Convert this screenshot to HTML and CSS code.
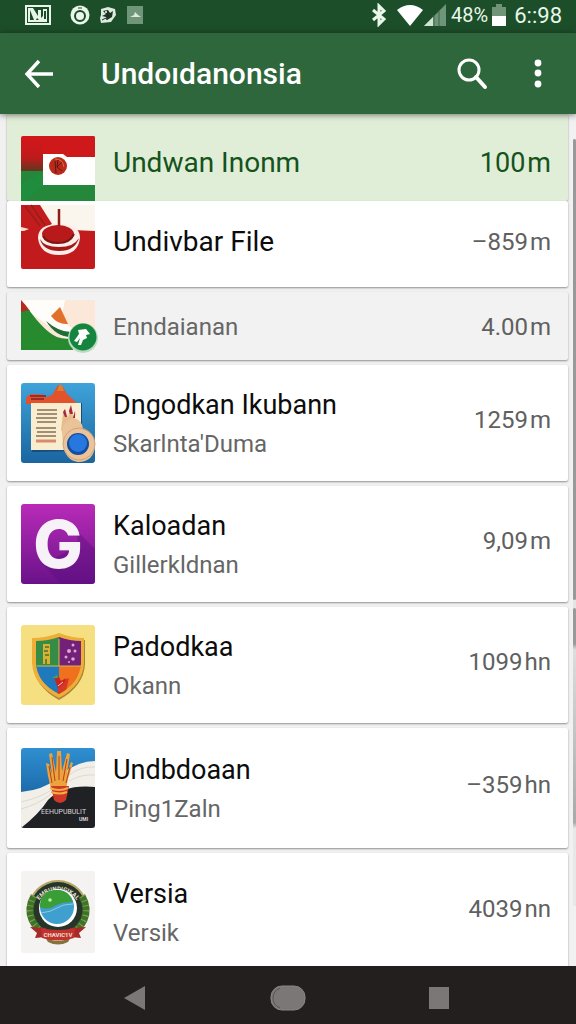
FILE: index.html
```html
<!DOCTYPE html>
<html lang="id">
<head>
    <meta charset="UTF-8">
    <meta name="viewport" content="width=device-width, initial-scale=1">
    <title>Undoıdanonsia</title>
    <link rel="stylesheet" href="styles.css">
</head>
<body>
<div class="status">
    <div class="status-left">
        <svg width="26" height="20" viewBox="0 0 26 20">
            <rect x="1" y="1" width="24" height="18" fill="#1c4a29" stroke="#e6f5e8" stroke-width="2"/>
            <path d="M3 3h5l5 8V5h3v8l2-2V4h4v13H3z" fill="#e6f5e8"/>
            <path d="M5 15V5l4 10zM11 15l1-2 2 2zM19 6h2v8h-2z" fill="#1c4a29"/>
        </svg>
        <svg class="ring" width="20" height="20" viewBox="0 0 20 20">
            <circle cx="10" cy="10" r="9.5" fill="#e8f7ea"/>
            <circle cx="10" cy="11" r="5" fill="none" stroke="#1c4a29" stroke-width="2"/>
            <path d="M8 3h4" stroke="#1c4a29"/>
        </svg>
        <svg width="18" height="18" viewBox="0 0 18 18">
            <path d="M2 3l7-2 7 2 1 6-5 7-10 1-1-5 1-3z" fill="#dcebdd"/>
            <path d="M4 5l5-1 2 3 3-2-1 6-5 3-1-3-4-1 4-2z" fill="#1b3322"/>
            <circle cx="7" cy="6" r="1" fill="#fff"/>
            <path d="M3 14l4-2 1 2" stroke="#1b3322" fill="none"/>
        </svg>
        <svg class="thumb" width="16" height="18" viewBox="0 0 16 18">
            <rect width="16" height="18" fill="#70967a"/>
            <path d="M3 11l4-2 1-3 3 3 3 2z" fill="#dde9df"/>
        </svg>
    </div>
    <div class="status-right">
        <svg width="16" height="24" viewBox="0 0 16 24">
            <path d="M2 7l11 9-5 5V3l5 5-11 9" fill="none" stroke="#e8f7ea" stroke-width="3"/>
        </svg>
        <svg class="wifi" width="26" height="21" viewBox="0 0 26 21">
            <path d="M0 5Q13-5 26 5L13 21z" fill="#fff"/>
        </svg>
        <svg width="22" height="22" viewBox="0 0 22 22">
            <path d="M0 22L22 0v22z" fill="#709479"/>
            <path d="M0 22l9-9v9z" fill="#d0e5d2"/>
            <path d="M10 11v11M15 6v16" stroke="#3c6949"/>
        </svg>
        <span class="percent">48%</span>
        <svg width="14" height="22" viewBox="0 0 14 22">
            <path d="M4 0h6v3h4v9H0V3h4z" fill="#6f9477"/>
            <path d="M0 12h14v10H0z" fill="#fff"/>
        </svg>
        <span class="clock">6::98</span>
    </div>
</div>

<header class="appbar">
    <button class="icon-btn" aria-label="Kembali">
        <svg width="30" height="30" viewBox="0 0 30 30">
            <path d="M15 2L3 15l12 13M3 15h26" fill="none" stroke="#fff" stroke-width="3.4"/>
        </svg>
    </button>
    <h1 class="title">Undoıdanonsia</h1>
    <button class="icon-btn" aria-label="Cari">
        <svg width="32" height="32" viewBox="0 0 32 32">
            <circle cx="12" cy="12" r="10" fill="none" stroke="#fff" stroke-width="3"/>
            <path d="M19 19l9 10" stroke="#fff" stroke-width="4" stroke-linecap="round"/>
        </svg>
    </button>
    <button class="icon-btn more" aria-label="Menu">
        <svg width="8" height="30" viewBox="0 0 8 30">
            <g fill="#fff">
                <circle cx="4" cy="4" r="3.4"/>
                <circle cx="4" cy="14" r="3.4"/>
                <circle cx="4" cy="25" r="3.4"/>
            </g>
        </svg>
    </button>
</header>

<main class="content">
    <ul class="list">
        <li class="row active">
            <svg class="pic" width="74" height="65" viewBox="0 0 74 65">
                <defs>
                    <linearGradient id="red" x2="0" y2="1">
                        <stop offset="0" stop-color="#d31719"/>
                        <stop offset=".6" stop-color="#c01a1c"/>
                        <stop offset="1" stop-color="#5a3a20"/>
                    </linearGradient>
                </defs>
                <path d="M0 2q0-2 2-2h70q2 0 2 2v34H0z" fill="url(#red)"/>
                <path d="M0 35h74v30H0z" fill="#25873a"/>
                <path d="M0 48l22-12v14L4 65H0z" fill="#1f8d3d"/>
                <path d="M22 18V0h50q2 0 2 2v19H44v-3z" fill="#cf181a"/>
                <path d="M22 18h20l4 3h28v28H22z" fill="#fff"/>
                <circle cx="37" cy="30" r="9" fill="#b92a1c"/>
                <path d="M34 25l1 12M37 24l-1 7 5 4M41 26l-5 5" fill="none" stroke="#5d1712"/>
                <path d="M34 23q8 0 9 8" fill="none" stroke="#e2722f"/>
            </svg>
            <div class="text"><div class="name">Undwan Inonm</div></div>
            <div class="amount">100<span class="unit">m</span></div>
        </li>
        <li class="row cut">
            <svg class="pic" width="74" height="64" viewBox="0 0 74 64">
                <path d="M0 0h74v26H0z" fill="#faf5ed"/>
                <path d="M0 0h19l12 19-12 7-19-2z" fill="#c41c1d"/>
                <path d="M4 1l15 20M10 0l14 20" stroke="#96201b" stroke-width="1.5"/>
                <path d="M0 26l6-3 68 3v36q0 2-2 2H2q-2 0-2-2z" fill="#c21b1d"/>
                <path d="M0 22l8 2-5 2H0z" fill="#f6dccc"/>
                <path d="M17 33q0-14 21-14t21 14q-2 17-21 17T17 33z" fill="#fbeee9"/>
                <path d="M19 34q3 12 19 12t20-13q-5 9-20 9t-19-8z" fill="#a3191a"/>
                <ellipse cx="37" cy="29" rx="16" ry="9" fill="#b8191b"/>
                <path d="M22 31q3 7 15 7t16-9" fill="none" stroke="#7e1614" stroke-width="2"/>
                <path d="M38 4v17" stroke="#8f1d1a" stroke-width="2.5"/>
            </svg>
            <div class="text"><div class="name">Undivbar File</div></div>
            <div class="amount">–859<span class="unit">m</span></div>
        </li>
        <li class="row muted">
            <svg class="pic" width="74" height="50" viewBox="0 0 74 50">
                <rect width="74" height="50" rx="2" fill="#fbe8d8"/>
                <path d="M2 0h42l-4 20 22 16-12 6L0 6z" fill="#fffdf9"/>
                <path d="M0 0q5 5 9 11L0 14z" fill="#b42a20"/>
                <path d="M0 12l8-2q16 22 28 27 8 3 16 1v12H0z" fill="#278a2e"/>
                <path d="M25 21q14 12 27 11l-2 5q-15 0-25-16z" fill="#216d36"/>
                <path d="M30 16l9-9 8 17q-10 1-17-8z" fill="#e2702a"/>
                <circle cx="62" cy="38" r="15" fill="#b8dcc0"/>
                <circle cx="62" cy="37" r="13.5" fill="#14843e"/>
                <path d="M57 30l8-1 4 5-4 1 1 3-4 2-2 5h-3l2-7-3 4-3-1 5-7z" fill="#fff"/>
            </svg>
            <div class="text"><div class="sub">Enndaianan</div></div>
            <div class="amount">4.00<span class="unit">m</span></div>
        </li>
        <li class="row">
            <svg class="pic" width="74" height="80" viewBox="0 0 74 80">
                <defs>
                    <linearGradient id="blue" x2="0" y2="1">
                        <stop offset="0" stop-color="#3fa3da"/>
                        <stop offset="1" stop-color="#1a659f"/>
                    </linearGradient>
                </defs>
                <rect width="74" height="80" rx="3" fill="url(#blue)"/>
                <path d="M5 15q2-4 8-4l12 1-2 3 8-3 6-10h4l5 9 11 10H5z" fill="#e0532c"/>
                <path d="M36 8l2-6h3l2 6z" fill="#d98032"/>
                <path d="M9 13h16M10 16h13" stroke="#9d2c26" stroke-width="2"/>
                <path d="M11 21l50-1v48l-50 1z" fill="#164d7c"/>
                <path d="M10 20h50v47H10z" fill="#f8edcf"/>
                <path d="M16 27h20M16 31h20M15 35h21M16 39h19M15 45h20M16 49h19M15 53h20" stroke="#877057" stroke-width="1.3"/>
                <path d="M15 58h20" stroke="#d98c6b" stroke-width="3"/>
                <path d="M42 30l2-4 3 9 2-12 3 10 3-5-2 12 8 8-15 9-6-10z" fill="#e8bd8c"/>
                <path d="M42 29l2-3 2 8h-2zM48 28l2-6 2 9h-3zM54 28v7h-2z" fill="#aa2440"/>
                <path d="M41 50q0-12 12-15 8 2 9 11 12 4 12 16-1 17-17 17-13-2-15-18z" fill="#eac39a"/>
                <circle cx="58" cy="61" r="16" fill="none" stroke="#d5a276"/>
                <circle cx="57" cy="61" r="11" fill="#164c9e"/>
                <circle cx="57" cy="60" r="9" fill="#2677de"/>
            </svg>
            <div class="text">
                <div class="name">Dngodkan Ikubann</div>
                <div class="sub">Skarlnta'Duma</div>
            </div>
            <div class="amount">1259<span class="unit">m</span></div>
        </li>
        <li class="row">
            <svg class="pic" width="74" height="80" viewBox="0 0 74 80">
                <defs>
                    <linearGradient id="purple" x2="0" y2="1">
                        <stop offset="0" stop-color="#b92bb8"/>
                        <stop offset="1" stop-color="#6a128a"/>
                    </linearGradient>
                </defs>
                <rect width="74" height="80" rx="3" fill="url(#purple)"/>
                <path d="M56 27l18 18v32q0 3-3 3H40L22 60l35-18z" fill="#58107a" opacity=".4"/>
                <text class="g-mark" x="37" y="64" text-anchor="middle">G</text>
            </svg>
            <div class="text">
                <div class="name">Kaloadan</div>
                <div class="sub">Gillerkldnan</div>
            </div>
            <div class="amount">9,09<span class="unit">m</span></div>
        </li>
        <li class="row">
            <svg class="pic" width="74" height="80" viewBox="0 0 74 80">
                <defs>
                    <clipPath id="shield"><path d="M15 16q12 0 23-4 11 4 22 4v22q-1 20-22 31-22-11-23-31z"/></clipPath>
                </defs>
                <rect width="74" height="80" rx="3" fill="#f6df80"/>
                <path d="M12 15q13 0 26-5 13 5 26 5v24q-1 22-26 36-25-14-26-36z" fill="#a8843c"/>
                <path d="M11 13q14 0 27-5 13 5 25 5v25q-1 22-25 35-26-13-27-35z" fill="#efae38"/>
                <g clip-path="url(#shield)">
                    <path d="M14 10h24v31H14z" fill="#358d45"/>
                    <path d="M38 10h24v31H38z" fill="#722078"/>
                    <path d="M14 41h24v30H14z" fill="#1e79bd"/>
                    <path d="M38 41h24v30H38z" fill="#ef711e"/>
                    <path d="M38 57l10-4-4 17h-8z" fill="#d63825"/>
                </g>
                <path d="M22 19h7v20h-7z" fill="#d8b237"/>
                <path d="M24 22h4M23 26h4M24 30h4M25 34v5" stroke="#49702e" stroke-width="1.5"/>
                <path d="M38 14v27M16 41h44" stroke="#dfb64a"/>
                <g fill="#dda5d2">
                    <circle cx="52" cy="20" r="1.5"/><circle cx="48" cy="26" r="2"/><circle cx="54" cy="26" r="1.5"/>
                    <circle cx="45" cy="32" r="1.5"/><circle cx="52" cy="34" r="1.8"/><circle cx="48" cy="37" r="1"/>
                </g>
                <path d="M33 51l5 1 2 4 5-3-2 5-6 5-2-5z" fill="#c9231f"/>
                <path d="M31 53l5-3 1 3z" fill="#47a84a"/>
                <path d="M37 61l5-4" stroke="#f8d8b8"/>
            </svg>
            <div class="text">
                <div class="name">Padodkaa</div>
                <div class="sub">Okann</div>
            </div>
            <div class="amount">1099<span class="unit">hn</span></div>
        </li>
        <li class="row tall">
            <svg class="pic" width="74" height="80" viewBox="0 0 74 80">
                <defs>
                    <linearGradient id="sky" x2="0" y2="1">
                        <stop offset="0" stop-color="#2f8fd0"/>
                        <stop offset="1" stop-color="#0e4f8f"/>
                    </linearGradient>
                    <clipPath id="card"><rect width="74" height="80" rx="3"/></clipPath>
                </defs>
                <g clip-path="url(#card)">
                    <path d="M0 0h74v80H0z" fill="url(#sky)"/>
                    <path d="M0 44q22-2 35-13Q54 13 74 13v67H0z" fill="#f2efe8"/>
                    <path d="M0 54q22-5 33-14M0 61q18-5 30-15M48 27q12-9 26-8M48 33q12-7 26-6" fill="none" stroke="#dcd9d2"/>
                    <path d="M0 80q18-14 27-28 16-16 47-13v41z" fill="#202125"/>
                    <path d="M30 41l-3-13-2-13 3 1 3 10-3-20 3-1 4 19 1-21h4l1 20 5-18 3 1-3 19 4-11 2 1-5 16-2 11z" fill="#eba33b"/>
                    <path d="M31 35l-3-17M34 33l-3-24M38 32V8M42 33l4-22M45 35l4-16" fill="none" stroke="#b93d23"/>
                    <path d="M30 38h18l-3 14q-6 6-12 0z" fill="#cf3828"/>
                    <path d="M29 40q9 4 18 0M30 44q9 3 16 0" fill="none" stroke="#f2ae43" stroke-width="2"/>
                    <text class="tiny" x="20" y="66">EEHUPUBULIT</text>
                    <text class="tiny bold" x="58" y="73">UMI</text>
                </g>
            </svg>
            <div class="text">
                <div class="name">Undbdoaan</div>
                <div class="sub">Ping1Zaln</div>
            </div>
            <div class="amount">–359<span class="unit">hn</span></div>
        </li>
        <li class="row">
            <svg class="pic" width="74" height="82" viewBox="0 0 74 82">
                <defs>
                    <path id="arc" d="M15 36a23 23 0 0 1 44 0"/>
                </defs>
                <rect width="74" height="82" rx="3" fill="#f4f3f2"/>
                <circle cx="37" cy="39" r="30" fill="#b5a765"/>
                <circle cx="37" cy="39" r="28" fill="#26342a"/>
                <path d="M13 25q-7 12-2 24 5 10 13 13M61 25q7 12 2 24-5 10-13 13" fill="none" stroke="#3d742a" stroke-width="7"/>
                <path d="M13 25q-7 12-2 24 5 10 13 13M61 25q7 12 2 24-5 10-13 13" fill="none" stroke="#8a9d4b" stroke-width="6" stroke-dasharray="1 4"/>
                <text class="seal"><textPath href="#arc" startOffset="50%" text-anchor="middle">EMBUNDIGIKAL</textPath></text>
                <circle cx="37" cy="37" r="19" fill="#fff"/>
                <circle cx="36" cy="36" r="17" fill="#3f9fce"/>
                <path d="M19 36q0-17 17-17 12 0 16 12-13 0-20 5-7 3-13 0z" fill="#3b9d36"/>
                <path d="M20 42q10-1 16-5t16-4" fill="none" stroke="#8ccbd8"/>
                <circle cx="29" cy="29" r="1.8" fill="#baf19c"/>
                <path d="M24 66q13 8 26 0l-3 5q-10 5-20 0z" fill="#857338"/>
                <path d="M9 56l16 1v9l-11 1 2-5zM65 56l-16 1v9l11 1-2-5z" fill="#a52a29"/>
                <path d="M20 57q17 4 34 0l-1 10q-16 5-32 0z" fill="#c1312f"/>
                <text class="seal" x="37" y="66" text-anchor="middle">CHAVIC1V</text>
            </svg>
            <div class="text">
                <div class="name">Versia</div>
                <div class="sub">Versik</div>
            </div>
            <div class="amount">4039<span class="unit">nn</span></div>
        </li>
    </ul>
    <div class="scrollbar">
        <span class="thumb-a"></span>
        <span class="thumb-b"></span>
    </div>
</main>

<nav class="navbar">
    <button class="nav-btn" aria-label="Back">
        <svg width="24" height="26" viewBox="0 0 24 26"><path d="M1 13L22 1v24z" fill="#7c7777"/></svg>
    </button>
    <button class="nav-btn" aria-label="Home">
        <svg width="36" height="26" viewBox="0 0 36 26">
            <rect x="1" y="1" width="34" height="24" rx="11" fill="#7c7777" stroke="#8a8585"/>
            <path d="M10 3q-7 3-7 10t7 10" fill="none" stroke="#5a5555"/>
        </svg>
    </button>
    <button class="nav-btn" aria-label="Recent">
        <svg width="22" height="26" viewBox="0 0 22 26"><path d="M1 2h20v22H1z" fill="#7c7777"/></svg>
    </button>
</nav>
</body>
</html>
```

FILE: styles.css
```css
* {
    box-sizing: border-box;
}

body {
    margin: 0;
    height: 100vh;
    display: flex;
    flex-direction: column;
    background: #f1f1f2;
    font-family: Roboto, "Liberation Sans", sans-serif;
    overflow: hidden;
}

button {
    border: 0;
    padding: 0;
    background: none;
    cursor: pointer;
}

svg {
    display: block;
    flex: none;
}

/* status bar */
.status {
    flex: none;
    display: flex;
    justify-content: space-between;
    align-items: center;
    height: 33px;
    padding: 0 14px 3px 25px;
    background: #1c4e29;
    color: #e8f7ea;
}

.status-left,
.status-right {
    display: flex;
    align-items: center;
}

.ring {
    margin: 0 9px 0 19px;
}

.thumb {
    margin-left: 10px;
}

.wifi {
    margin: 0 1px 0 10px;
}

.percent {
    margin: 0 4px 0 5px;
    font-size: 20px;
}

.clock {
    margin-left: 8px;
    font-size: 22px;
}

/* app bar */
.appbar {
    flex: none;
    display: flex;
    align-items: center;
    height: 81px;
    padding: 0 34px 0 24px;
    background: #2e673c;
    box-shadow: 0 1px 6px rgba(0, 0, 0, 0.5);
    z-index: 1;
}

.title {
    flex: 1;
    margin: 0 0 0 47px;
    color: #fff;
    font-size: 30px;
    font-weight: 500;
}

.more {
    margin-left: 45px;
}

/* list */
.content {
    position: relative;
    flex: 1;
    min-height: 0;
    overflow: hidden;
}

.list {
    margin: 0;
    padding: 0 8px 0 7px;
    list-style: none;
}

.row {
    display: flex;
    align-items: center;
    margin-bottom: 5px;
    padding: 18px 17px 18px 14px;
    background: #fff;
    border-radius: 2px;
    box-shadow: 0 1px 2px rgba(0, 0, 0, 0.4);
}

.active {
    margin-bottom: 0;
    padding-top: 22px;
    padding-bottom: 0;
    background: #e0edd7;
}

.cut {
    padding-top: 4px;
}

.muted {
    padding-top: 8px;
    padding-bottom: 10px;
    background: #f2f2f2;
}

.tall {
    padding-top: 20px;
    padding-bottom: 20px;
}

.pic {
    overflow: visible;
}

.text {
    flex: 1;
    padding-top: 2px;
    margin-left: 18px;
}

.name {
    color: #0c0c0c;
    font-size: 27px;
    line-height: 40px;
}

.sub {
    color: #666;
    font-size: 24px;
    line-height: 38px;
}

.amount {
    padding-bottom: 6px;
    color: #606060;
    font-size: 24px;
}

.unit {
    margin-left: 2px;
}

.active .text,
.active .amount {
    padding: 0 0 12px;
}

.active .name,
.cut .name {
    font-size: 28px;
}

.active .name,
.active .amount {
    color: #14531b;
}

.active .amount {
    font-size: 27px;
}

.cut .text,
.cut .amount {
    padding: 10px 0 0;
}

.muted .text,
.muted .amount {
    padding: 4px 0 0;
}

.g-mark {
    fill: #f7f1f8;
    font: 800 66px Inter, sans-serif;
}

.tiny {
    fill: #d8d8d8;
    font: 7px Roboto, sans-serif;
}

.bold {
    font-size: 5px;
    font-weight: 700;
}

.seal {
    fill: #e9e4cf;
    font: 700 6px Roboto, sans-serif;
}

/* scroll position, drawn over the list edge */
.scrollbar {
    position: absolute;
    top: 25px;
    right: 0;
    bottom: 60px;
    width: 3px;
    display: flex;
    flex-direction: column;
    gap: 8px;
    background: #e4e4e4;
}

.thumb-a {
    flex: 461;
    border-radius: 2px;
    background: #999;
}

.thumb-b {
    flex: 298;
    border-radius: 2px;
    background: linear-gradient(#999 12%, #ddd 14%, #aaa 70%, #aaa 72%, #e8e8e8 74%);
}

/* system navigation */
.navbar {
    flex: none;
    display: flex;
    justify-content: space-between;
    align-items: center;
    height: 58px;
    padding: 6px 126px 0 123px;
    background: #241f1f;
}
```
